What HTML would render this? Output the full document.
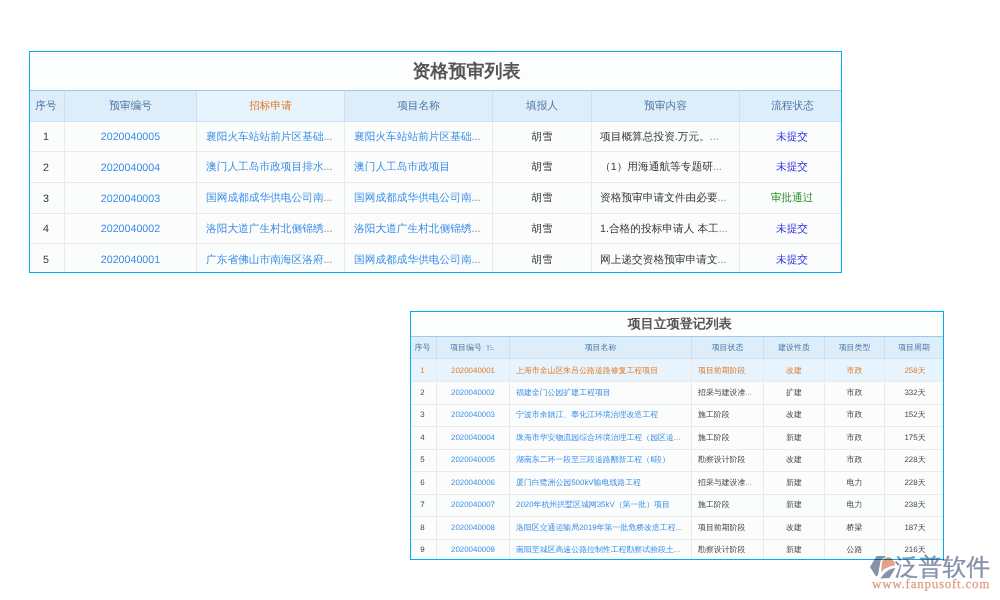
<!DOCTYPE html><html><head><meta charset="utf-8"><style>
*{margin:0;padding:0;box-sizing:border-box}
html,body{width:1000px;height:600px;background:#fff;overflow:hidden;font-family:"Liberation Sans",sans-serif;text-rendering:geometricPrecision}
.a{position:absolute}
.t{position:absolute;white-space:nowrap;overflow:visible}
.c{text-align:center}
.el{color:#8a8a8a}
</style></head><body><div class="a" style="left:29px;top:51px;width:813px;height:222px;background:#00adee"></div>
<div class="a" style="left:30px;top:52px;width:811px;height:220px;background:#fcfdfd"></div>
<div class="a" style="left:30px;top:90px;width:811px;height:1px;background:#9ccaee"></div>
<div class="a" style="left:30px;top:91px;width:811px;height:30px;background:#deedfa"></div>
<div class="a" style="left:197px;top:91px;width:147px;height:30px;background:#e8f4fd"></div>
<div class="a" style="left:30px;top:121px;width:811px;height:1px;background:#cfe2f3"></div>
<div class="a" style="left:30px;top:122px;width:811px;height:29px;background:#fbfdfd"></div>
<div class="a" style="left:30px;top:152px;width:811px;height:30px;background:#fcfcfc"></div>
<div class="a" style="left:30px;top:183px;width:811px;height:30px;background:#fbfdfd"></div>
<div class="a" style="left:30px;top:214px;width:811px;height:29px;background:#fcfcfc"></div>
<div class="a" style="left:30px;top:244px;width:811px;height:28px;background:#fbfdfd"></div>
<div class="a" style="left:30px;top:151px;width:811px;height:1px;background:#e9eaeb"></div>
<div class="a" style="left:30px;top:182px;width:811px;height:1px;background:#e9eaeb"></div>
<div class="a" style="left:30px;top:213px;width:811px;height:1px;background:#e9eaeb"></div>
<div class="a" style="left:30px;top:243px;width:811px;height:1px;background:#e9eaeb"></div>
<div class="a" style="left:64px;top:91px;width:1px;height:30px;background:#c8def1"></div>
<div class="a" style="left:64px;top:122px;width:1px;height:150px;background:#e8e9ea"></div>
<div class="a" style="left:196px;top:91px;width:1px;height:30px;background:#c8def1"></div>
<div class="a" style="left:196px;top:122px;width:1px;height:150px;background:#e8e9ea"></div>
<div class="a" style="left:344px;top:91px;width:1px;height:30px;background:#c8def1"></div>
<div class="a" style="left:344px;top:122px;width:1px;height:150px;background:#e8e9ea"></div>
<div class="a" style="left:492px;top:91px;width:1px;height:30px;background:#c8def1"></div>
<div class="a" style="left:492px;top:122px;width:1px;height:150px;background:#e8e9ea"></div>
<div class="a" style="left:591px;top:91px;width:1px;height:30px;background:#c8def1"></div>
<div class="a" style="left:591px;top:122px;width:1px;height:150px;background:#e8e9ea"></div>
<div class="a" style="left:739px;top:91px;width:1px;height:30px;background:#c8def1"></div>
<div class="a" style="left:739px;top:122px;width:1px;height:150px;background:#e8e9ea"></div>
<div class="t" style="left:380px;width:173px;text-align:center;top:59.40px;height:25.2px;line-height:25.2px;font-size:18px;color:#555;font-weight:bold">资格预审列表</div>
<div class="t" style="left:29px;width:34px;text-align:center;top:98.51px;height:14.979999999999999px;line-height:14.979999999999999px;font-size:10.7px;color:#4d77a3;font-weight:normal">序号</div>
<div class="t" style="left:65px;width:131px;text-align:center;top:98.51px;height:14.979999999999999px;line-height:14.979999999999999px;font-size:10.7px;color:#4d77a3;font-weight:normal">预审编号</div>
<div class="t" style="left:197px;width:147px;text-align:center;top:98.51px;height:14.979999999999999px;line-height:14.979999999999999px;font-size:10.7px;color:#e07b22;font-weight:normal">招标申请</div>
<div class="t" style="left:345px;width:147px;text-align:center;top:98.51px;height:14.979999999999999px;line-height:14.979999999999999px;font-size:10.7px;color:#4d77a3;font-weight:normal">项目名称</div>
<div class="t" style="left:493px;width:98px;text-align:center;top:98.51px;height:14.979999999999999px;line-height:14.979999999999999px;font-size:10.7px;color:#4d77a3;font-weight:normal">填报人</div>
<div class="t" style="left:592px;width:147px;text-align:center;top:98.51px;height:14.979999999999999px;line-height:14.979999999999999px;font-size:10.7px;color:#4d77a3;font-weight:normal">预审内容</div>
<div class="t" style="left:742px;width:101px;text-align:center;top:98.51px;height:14.979999999999999px;line-height:14.979999999999999px;font-size:10.7px;color:#4d77a3;font-weight:normal">流程状态</div>
<div class="t" style="left:29px;width:34px;text-align:center;top:130.21px;height:14.979999999999999px;line-height:14.979999999999999px;font-size:10.7px;color:#383838;font-weight:normal">1</div>
<div class="t" style="left:65px;width:131px;text-align:center;top:130.21px;height:14.979999999999999px;line-height:14.979999999999999px;font-size:10.7px;color:#3a8ee6;font-weight:normal">2020040005</div>
<div class="t" style="left:206px;width:138px;text-align:left;top:129.51px;height:14.979999999999999px;line-height:14.979999999999999px;font-size:10.7px;color:#3a8ee6;font-weight:normal">襄阳火车站站前片区基础<span class="el">...</span></div>
<div class="t" style="left:354px;width:138px;text-align:left;top:129.51px;height:14.979999999999999px;line-height:14.979999999999999px;font-size:10.7px;color:#3a8ee6;font-weight:normal">襄阳火车站站前片区基础<span class="el">...</span></div>
<div class="t" style="left:493px;width:98px;text-align:center;top:129.51px;height:14.979999999999999px;line-height:14.979999999999999px;font-size:10.7px;color:#383838;font-weight:normal">胡雪</div>
<div class="t" style="left:600px;width:139px;text-align:left;top:129.51px;height:14.979999999999999px;line-height:14.979999999999999px;font-size:10.7px;color:#383838;font-weight:normal">项目概算总投资.万元。<span class="el">...</span></div>
<div class="t" style="left:741.5px;width:101.0px;text-align:center;top:129.51px;height:14.979999999999999px;line-height:14.979999999999999px;font-size:10.7px;color:#3030e0;font-weight:normal">未提交</div>
<div class="t" style="left:29px;width:34px;text-align:center;top:160.96px;height:14.979999999999999px;line-height:14.979999999999999px;font-size:10.7px;color:#383838;font-weight:normal">2</div>
<div class="t" style="left:65px;width:131px;text-align:center;top:160.96px;height:14.979999999999999px;line-height:14.979999999999999px;font-size:10.7px;color:#3a8ee6;font-weight:normal">2020040004</div>
<div class="t" style="left:206px;width:138px;text-align:left;top:160.26px;height:14.979999999999999px;line-height:14.979999999999999px;font-size:10.7px;color:#3a8ee6;font-weight:normal">澳门人工岛市政项目排水<span class="el">...</span></div>
<div class="t" style="left:354px;width:138px;text-align:left;top:160.26px;height:14.979999999999999px;line-height:14.979999999999999px;font-size:10.7px;color:#3a8ee6;font-weight:normal">澳门人工岛市政项目</div>
<div class="t" style="left:493px;width:98px;text-align:center;top:160.26px;height:14.979999999999999px;line-height:14.979999999999999px;font-size:10.7px;color:#383838;font-weight:normal">胡雪</div>
<div class="t" style="left:600px;width:139px;text-align:left;top:160.26px;height:14.979999999999999px;line-height:14.979999999999999px;font-size:10.7px;color:#383838;font-weight:normal">（1）用海通航等专题研<span class="el">...</span></div>
<div class="t" style="left:741.5px;width:101.0px;text-align:center;top:160.26px;height:14.979999999999999px;line-height:14.979999999999999px;font-size:10.7px;color:#3030e0;font-weight:normal">未提交</div>
<div class="t" style="left:29px;width:34px;text-align:center;top:191.71px;height:14.979999999999999px;line-height:14.979999999999999px;font-size:10.7px;color:#383838;font-weight:normal">3</div>
<div class="t" style="left:65px;width:131px;text-align:center;top:191.71px;height:14.979999999999999px;line-height:14.979999999999999px;font-size:10.7px;color:#3a8ee6;font-weight:normal">2020040003</div>
<div class="t" style="left:206px;width:138px;text-align:left;top:191.01px;height:14.979999999999999px;line-height:14.979999999999999px;font-size:10.7px;color:#3a8ee6;font-weight:normal">国网成都成华供电公司南<span class="el">...</span></div>
<div class="t" style="left:354px;width:138px;text-align:left;top:191.01px;height:14.979999999999999px;line-height:14.979999999999999px;font-size:10.7px;color:#3a8ee6;font-weight:normal">国网成都成华供电公司南<span class="el">...</span></div>
<div class="t" style="left:493px;width:98px;text-align:center;top:191.01px;height:14.979999999999999px;line-height:14.979999999999999px;font-size:10.7px;color:#383838;font-weight:normal">胡雪</div>
<div class="t" style="left:600px;width:139px;text-align:left;top:191.01px;height:14.979999999999999px;line-height:14.979999999999999px;font-size:10.7px;color:#383838;font-weight:normal">资格预审申请文件由必要<span class="el">...</span></div>
<div class="t" style="left:741.5px;width:101.0px;text-align:center;top:191.01px;height:14.979999999999999px;line-height:14.979999999999999px;font-size:10.7px;color:#2a8f2a;font-weight:normal">审批通过</div>
<div class="t" style="left:29px;width:34px;text-align:center;top:222.46px;height:14.979999999999999px;line-height:14.979999999999999px;font-size:10.7px;color:#383838;font-weight:normal">4</div>
<div class="t" style="left:65px;width:131px;text-align:center;top:222.46px;height:14.979999999999999px;line-height:14.979999999999999px;font-size:10.7px;color:#3a8ee6;font-weight:normal">2020040002</div>
<div class="t" style="left:206px;width:138px;text-align:left;top:221.76px;height:14.979999999999999px;line-height:14.979999999999999px;font-size:10.7px;color:#3a8ee6;font-weight:normal">洛阳大道广生村北侧锦绣<span class="el">...</span></div>
<div class="t" style="left:354px;width:138px;text-align:left;top:221.76px;height:14.979999999999999px;line-height:14.979999999999999px;font-size:10.7px;color:#3a8ee6;font-weight:normal">洛阳大道广生村北侧锦绣<span class="el">...</span></div>
<div class="t" style="left:493px;width:98px;text-align:center;top:221.76px;height:14.979999999999999px;line-height:14.979999999999999px;font-size:10.7px;color:#383838;font-weight:normal">胡雪</div>
<div class="t" style="left:600px;width:139px;text-align:left;top:221.76px;height:14.979999999999999px;line-height:14.979999999999999px;font-size:10.7px;color:#383838;font-weight:normal">1.合格的投标申请人 本工<span class="el">...</span></div>
<div class="t" style="left:741.5px;width:101.0px;text-align:center;top:221.76px;height:14.979999999999999px;line-height:14.979999999999999px;font-size:10.7px;color:#3030e0;font-weight:normal">未提交</div>
<div class="t" style="left:29px;width:34px;text-align:center;top:253.21px;height:14.979999999999999px;line-height:14.979999999999999px;font-size:10.7px;color:#383838;font-weight:normal">5</div>
<div class="t" style="left:65px;width:131px;text-align:center;top:253.21px;height:14.979999999999999px;line-height:14.979999999999999px;font-size:10.7px;color:#3a8ee6;font-weight:normal">2020040001</div>
<div class="t" style="left:206px;width:138px;text-align:left;top:252.51px;height:14.979999999999999px;line-height:14.979999999999999px;font-size:10.7px;color:#3a8ee6;font-weight:normal">广东省佛山市南海区洛府<span class="el">...</span></div>
<div class="t" style="left:354px;width:138px;text-align:left;top:252.51px;height:14.979999999999999px;line-height:14.979999999999999px;font-size:10.7px;color:#3a8ee6;font-weight:normal">国网成都成华供电公司南<span class="el">...</span></div>
<div class="t" style="left:493px;width:98px;text-align:center;top:252.51px;height:14.979999999999999px;line-height:14.979999999999999px;font-size:10.7px;color:#383838;font-weight:normal">胡雪</div>
<div class="t" style="left:600px;width:139px;text-align:left;top:252.51px;height:14.979999999999999px;line-height:14.979999999999999px;font-size:10.7px;color:#383838;font-weight:normal">网上递交资格预审申请文<span class="el">...</span></div>
<div class="t" style="left:741.5px;width:101.0px;text-align:center;top:252.51px;height:14.979999999999999px;line-height:14.979999999999999px;font-size:10.7px;color:#3030e0;font-weight:normal">未提交</div>
<div class="a" style="left:410px;top:311px;width:534px;height:249px;background:#00adee"></div>
<div class="a" style="left:411px;top:312px;width:532px;height:247px;background:#fcfdfd"></div>
<div class="a" style="left:411px;top:336px;width:532px;height:1px;background:#9ccaee"></div>
<div class="a" style="left:411px;top:337px;width:532px;height:22px;background:#deedfa"></div>
<div class="a" style="left:411px;top:358px;width:532px;height:1px;background:#cfe2f3"></div>
<div class="a" style="left:411px;top:359px;width:532px;height:22px;background:#e8f4fd"></div>
<div class="a" style="left:411px;top:382px;width:532px;height:22px;background:#fcfcfc"></div>
<div class="a" style="left:411px;top:405px;width:532px;height:21px;background:#fbfdfd"></div>
<div class="a" style="left:411px;top:427px;width:532px;height:22px;background:#fcfcfc"></div>
<div class="a" style="left:411px;top:450px;width:532px;height:21px;background:#fbfdfd"></div>
<div class="a" style="left:411px;top:472px;width:532px;height:22px;background:#fcfcfc"></div>
<div class="a" style="left:411px;top:495px;width:532px;height:21px;background:#fbfdfd"></div>
<div class="a" style="left:411px;top:517px;width:532px;height:22px;background:#fcfcfc"></div>
<div class="a" style="left:411px;top:540px;width:532px;height:19px;background:#fbfdfd"></div>
<div class="a" style="left:411px;top:381px;width:532px;height:1px;background:#e9eaeb"></div>
<div class="a" style="left:411px;top:404px;width:532px;height:1px;background:#e9eaeb"></div>
<div class="a" style="left:411px;top:426px;width:532px;height:1px;background:#e9eaeb"></div>
<div class="a" style="left:411px;top:449px;width:532px;height:1px;background:#e9eaeb"></div>
<div class="a" style="left:411px;top:471px;width:532px;height:1px;background:#e9eaeb"></div>
<div class="a" style="left:411px;top:494px;width:532px;height:1px;background:#e9eaeb"></div>
<div class="a" style="left:411px;top:516px;width:532px;height:1px;background:#e9eaeb"></div>
<div class="a" style="left:411px;top:539px;width:532px;height:1px;background:#e9eaeb"></div>
<div class="a" style="left:436px;top:337px;width:1px;height:21px;background:#c8def1"></div>
<div class="a" style="left:436px;top:359px;width:1px;height:200px;background:#e8e9ea"></div>
<div class="a" style="left:509px;top:337px;width:1px;height:21px;background:#c8def1"></div>
<div class="a" style="left:509px;top:359px;width:1px;height:200px;background:#e8e9ea"></div>
<div class="a" style="left:691px;top:337px;width:1px;height:21px;background:#c8def1"></div>
<div class="a" style="left:691px;top:359px;width:1px;height:200px;background:#e8e9ea"></div>
<div class="a" style="left:763px;top:337px;width:1px;height:21px;background:#c8def1"></div>
<div class="a" style="left:763px;top:359px;width:1px;height:200px;background:#e8e9ea"></div>
<div class="a" style="left:824px;top:337px;width:1px;height:21px;background:#c8def1"></div>
<div class="a" style="left:824px;top:359px;width:1px;height:200px;background:#e8e9ea"></div>
<div class="a" style="left:884px;top:337px;width:1px;height:21px;background:#c8def1"></div>
<div class="a" style="left:884px;top:359px;width:1px;height:200px;background:#e8e9ea"></div>
<div class="t" style="left:600px;width:159.39999999999998px;text-align:center;top:314.90px;height:18.2px;line-height:18.2px;font-size:13px;color:#555;font-weight:bold">项目立项登记列表</div>
<div class="t" style="left:410px;width:25px;text-align:center;top:341.97px;height:11.06px;line-height:11.06px;font-size:7.9px;color:#4d77a3;font-weight:normal">序号</div>
<div class="t" style="left:430px;width:72px;text-align:center;top:341.97px;height:11.06px;line-height:11.06px;font-size:7.9px;color:#4d77a3;font-weight:normal">项目编号</div>
<div class="t" style="left:510px;width:181px;text-align:center;top:341.97px;height:11.06px;line-height:11.06px;font-size:7.9px;color:#4d77a3;font-weight:normal">项目名称</div>
<div class="t" style="left:692px;width:71px;text-align:center;top:341.97px;height:11.06px;line-height:11.06px;font-size:7.9px;color:#4d77a3;font-weight:normal">项目状态</div>
<div class="t" style="left:764px;width:60px;text-align:center;top:341.97px;height:11.06px;line-height:11.06px;font-size:7.9px;color:#4d77a3;font-weight:normal">建设性质</div>
<div class="t" style="left:825px;width:59px;text-align:center;top:341.97px;height:11.06px;line-height:11.06px;font-size:7.9px;color:#4d77a3;font-weight:normal">项目类型</div>
<div class="t" style="left:885px;width:58px;text-align:center;top:341.97px;height:11.06px;line-height:11.06px;font-size:7.9px;color:#4d77a3;font-weight:normal">项目周期</div>
<svg class="a" style="left:486px;top:344px" width="10" height="8" viewBox="0 0 10 8"><g fill="#93bae0"><rect x="1.4" y="1" width="1.5" height="5.5"/><rect x="0.9" y="1" width="2.5" height="0.9"/><rect x="4" y="1" width="1.2" height="0.9"/><rect x="4" y="3" width="2.6" height="0.9"/><rect x="4" y="5" width="4" height="0.9"/></g></svg>
<div class="t" style="left:410px;width:25px;text-align:center;top:364.57px;height:11.06px;line-height:11.06px;font-size:7.9px;color:#e07b2a;font-weight:normal">1</div>
<div class="t" style="left:437px;width:72px;text-align:center;top:364.57px;height:11.06px;line-height:11.06px;font-size:7.9px;color:#e07b2a;font-weight:normal">2020040001</div>
<div class="t" style="left:516px;width:175px;text-align:left;top:364.57px;height:11.06px;line-height:11.06px;font-size:7.9px;color:#e07b2a;font-weight:normal">上海市金山区朱吕公路道路修复工程项目</div>
<div class="t" style="left:698px;width:65px;text-align:left;top:364.57px;height:11.06px;line-height:11.06px;font-size:7.9px;color:#e07b2a;font-weight:normal">项目前期阶段</div>
<div class="t" style="left:764px;width:60px;text-align:center;top:364.57px;height:11.06px;line-height:11.06px;font-size:7.9px;color:#e07b2a;font-weight:normal">改建</div>
<div class="t" style="left:825px;width:59px;text-align:center;top:364.57px;height:11.06px;line-height:11.06px;font-size:7.9px;color:#e07b2a;font-weight:normal">市政</div>
<div class="t" style="left:886px;width:58px;text-align:center;top:364.57px;height:11.06px;line-height:11.06px;font-size:7.9px;color:#e07b2a;font-weight:normal">258天</div>
<div class="t" style="left:410px;width:25px;text-align:center;top:387.03px;height:11.06px;line-height:11.06px;font-size:7.9px;color:#444;font-weight:normal">2</div>
<div class="t" style="left:437px;width:72px;text-align:center;top:387.03px;height:11.06px;line-height:11.06px;font-size:7.9px;color:#3a8ee6;font-weight:normal">2020040002</div>
<div class="t" style="left:516px;width:175px;text-align:left;top:387.03px;height:11.06px;line-height:11.06px;font-size:7.9px;color:#3a8ee6;font-weight:normal">福建金门公园扩建工程项目</div>
<div class="t" style="left:698px;width:65px;text-align:left;top:387.03px;height:11.06px;line-height:11.06px;font-size:7.9px;color:#444;font-weight:normal">招采与建设准<span class="el">...</span></div>
<div class="t" style="left:764px;width:60px;text-align:center;top:387.03px;height:11.06px;line-height:11.06px;font-size:7.9px;color:#444;font-weight:normal">扩建</div>
<div class="t" style="left:825px;width:59px;text-align:center;top:387.03px;height:11.06px;line-height:11.06px;font-size:7.9px;color:#444;font-weight:normal">市政</div>
<div class="t" style="left:886px;width:58px;text-align:center;top:387.03px;height:11.06px;line-height:11.06px;font-size:7.9px;color:#444;font-weight:normal">332天</div>
<div class="t" style="left:410px;width:25px;text-align:center;top:409.49px;height:11.06px;line-height:11.06px;font-size:7.9px;color:#444;font-weight:normal">3</div>
<div class="t" style="left:437px;width:72px;text-align:center;top:409.49px;height:11.06px;line-height:11.06px;font-size:7.9px;color:#3a8ee6;font-weight:normal">2020040003</div>
<div class="t" style="left:516px;width:175px;text-align:left;top:409.49px;height:11.06px;line-height:11.06px;font-size:7.9px;color:#3a8ee6;font-weight:normal">宁波市余姚江、奉化江环境治理改造工程</div>
<div class="t" style="left:698px;width:65px;text-align:left;top:409.49px;height:11.06px;line-height:11.06px;font-size:7.9px;color:#444;font-weight:normal">施工阶段</div>
<div class="t" style="left:764px;width:60px;text-align:center;top:409.49px;height:11.06px;line-height:11.06px;font-size:7.9px;color:#444;font-weight:normal">改建</div>
<div class="t" style="left:825px;width:59px;text-align:center;top:409.49px;height:11.06px;line-height:11.06px;font-size:7.9px;color:#444;font-weight:normal">市政</div>
<div class="t" style="left:886px;width:58px;text-align:center;top:409.49px;height:11.06px;line-height:11.06px;font-size:7.9px;color:#444;font-weight:normal">152天</div>
<div class="t" style="left:410px;width:25px;text-align:center;top:431.95px;height:11.06px;line-height:11.06px;font-size:7.9px;color:#444;font-weight:normal">4</div>
<div class="t" style="left:437px;width:72px;text-align:center;top:431.95px;height:11.06px;line-height:11.06px;font-size:7.9px;color:#3a8ee6;font-weight:normal">2020040004</div>
<div class="t" style="left:516px;width:175px;text-align:left;top:431.95px;height:11.06px;line-height:11.06px;font-size:7.9px;color:#3a8ee6;font-weight:normal">珠海市华安物流园综合环境治理工程（园区道<span class="el">...</span></div>
<div class="t" style="left:698px;width:65px;text-align:left;top:431.95px;height:11.06px;line-height:11.06px;font-size:7.9px;color:#444;font-weight:normal">施工阶段</div>
<div class="t" style="left:764px;width:60px;text-align:center;top:431.95px;height:11.06px;line-height:11.06px;font-size:7.9px;color:#444;font-weight:normal">新建</div>
<div class="t" style="left:825px;width:59px;text-align:center;top:431.95px;height:11.06px;line-height:11.06px;font-size:7.9px;color:#444;font-weight:normal">市政</div>
<div class="t" style="left:886px;width:58px;text-align:center;top:431.95px;height:11.06px;line-height:11.06px;font-size:7.9px;color:#444;font-weight:normal">175天</div>
<div class="t" style="left:410px;width:25px;text-align:center;top:454.41px;height:11.06px;line-height:11.06px;font-size:7.9px;color:#444;font-weight:normal">5</div>
<div class="t" style="left:437px;width:72px;text-align:center;top:454.41px;height:11.06px;line-height:11.06px;font-size:7.9px;color:#3a8ee6;font-weight:normal">2020040005</div>
<div class="t" style="left:516px;width:175px;text-align:left;top:454.41px;height:11.06px;line-height:11.06px;font-size:7.9px;color:#3a8ee6;font-weight:normal">湖南东二环一段至三段道路翻新工程（Ⅱ段）</div>
<div class="t" style="left:698px;width:65px;text-align:left;top:454.41px;height:11.06px;line-height:11.06px;font-size:7.9px;color:#444;font-weight:normal">勘察设计阶段</div>
<div class="t" style="left:764px;width:60px;text-align:center;top:454.41px;height:11.06px;line-height:11.06px;font-size:7.9px;color:#444;font-weight:normal">改建</div>
<div class="t" style="left:825px;width:59px;text-align:center;top:454.41px;height:11.06px;line-height:11.06px;font-size:7.9px;color:#444;font-weight:normal">市政</div>
<div class="t" style="left:886px;width:58px;text-align:center;top:454.41px;height:11.06px;line-height:11.06px;font-size:7.9px;color:#444;font-weight:normal">228天</div>
<div class="t" style="left:410px;width:25px;text-align:center;top:476.87px;height:11.06px;line-height:11.06px;font-size:7.9px;color:#444;font-weight:normal">6</div>
<div class="t" style="left:437px;width:72px;text-align:center;top:476.87px;height:11.06px;line-height:11.06px;font-size:7.9px;color:#3a8ee6;font-weight:normal">2020040006</div>
<div class="t" style="left:516px;width:175px;text-align:left;top:476.87px;height:11.06px;line-height:11.06px;font-size:7.9px;color:#3a8ee6;font-weight:normal">厦门白鹭洲公园500kV输电线路工程</div>
<div class="t" style="left:698px;width:65px;text-align:left;top:476.87px;height:11.06px;line-height:11.06px;font-size:7.9px;color:#444;font-weight:normal">招采与建设准<span class="el">...</span></div>
<div class="t" style="left:764px;width:60px;text-align:center;top:476.87px;height:11.06px;line-height:11.06px;font-size:7.9px;color:#444;font-weight:normal">新建</div>
<div class="t" style="left:825px;width:59px;text-align:center;top:476.87px;height:11.06px;line-height:11.06px;font-size:7.9px;color:#444;font-weight:normal">电力</div>
<div class="t" style="left:886px;width:58px;text-align:center;top:476.87px;height:11.06px;line-height:11.06px;font-size:7.9px;color:#444;font-weight:normal">228天</div>
<div class="t" style="left:410px;width:25px;text-align:center;top:499.33px;height:11.06px;line-height:11.06px;font-size:7.9px;color:#444;font-weight:normal">7</div>
<div class="t" style="left:437px;width:72px;text-align:center;top:499.33px;height:11.06px;line-height:11.06px;font-size:7.9px;color:#3a8ee6;font-weight:normal">2020040007</div>
<div class="t" style="left:516px;width:175px;text-align:left;top:499.33px;height:11.06px;line-height:11.06px;font-size:7.9px;color:#3a8ee6;font-weight:normal">2020年杭州拱墅区城网35kV（第一批）项目</div>
<div class="t" style="left:698px;width:65px;text-align:left;top:499.33px;height:11.06px;line-height:11.06px;font-size:7.9px;color:#444;font-weight:normal">施工阶段</div>
<div class="t" style="left:764px;width:60px;text-align:center;top:499.33px;height:11.06px;line-height:11.06px;font-size:7.9px;color:#444;font-weight:normal">新建</div>
<div class="t" style="left:825px;width:59px;text-align:center;top:499.33px;height:11.06px;line-height:11.06px;font-size:7.9px;color:#444;font-weight:normal">电力</div>
<div class="t" style="left:886px;width:58px;text-align:center;top:499.33px;height:11.06px;line-height:11.06px;font-size:7.9px;color:#444;font-weight:normal">238天</div>
<div class="t" style="left:410px;width:25px;text-align:center;top:521.79px;height:11.06px;line-height:11.06px;font-size:7.9px;color:#444;font-weight:normal">8</div>
<div class="t" style="left:437px;width:72px;text-align:center;top:521.79px;height:11.06px;line-height:11.06px;font-size:7.9px;color:#3a8ee6;font-weight:normal">2020040008</div>
<div class="t" style="left:516px;width:175px;text-align:left;top:521.79px;height:11.06px;line-height:11.06px;font-size:7.9px;color:#3a8ee6;font-weight:normal">洛阳区交通运输局2019年第一批危桥改造工程<span class="el">...</span></div>
<div class="t" style="left:698px;width:65px;text-align:left;top:521.79px;height:11.06px;line-height:11.06px;font-size:7.9px;color:#444;font-weight:normal">项目前期阶段</div>
<div class="t" style="left:764px;width:60px;text-align:center;top:521.79px;height:11.06px;line-height:11.06px;font-size:7.9px;color:#444;font-weight:normal">改建</div>
<div class="t" style="left:825px;width:59px;text-align:center;top:521.79px;height:11.06px;line-height:11.06px;font-size:7.9px;color:#444;font-weight:normal">桥梁</div>
<div class="t" style="left:886px;width:58px;text-align:center;top:521.79px;height:11.06px;line-height:11.06px;font-size:7.9px;color:#444;font-weight:normal">187天</div>
<div class="t" style="left:410px;width:25px;text-align:center;top:544.25px;height:11.06px;line-height:11.06px;font-size:7.9px;color:#444;font-weight:normal">9</div>
<div class="t" style="left:437px;width:72px;text-align:center;top:544.25px;height:11.06px;line-height:11.06px;font-size:7.9px;color:#3a8ee6;font-weight:normal">2020040009</div>
<div class="t" style="left:516px;width:175px;text-align:left;top:544.25px;height:11.06px;line-height:11.06px;font-size:7.9px;color:#3a8ee6;font-weight:normal">南阳至城区高速公路控制性工程勘察试验段土<span class="el">...</span></div>
<div class="t" style="left:698px;width:65px;text-align:left;top:544.25px;height:11.06px;line-height:11.06px;font-size:7.9px;color:#444;font-weight:normal">勘察设计阶段</div>
<div class="t" style="left:764px;width:60px;text-align:center;top:544.25px;height:11.06px;line-height:11.06px;font-size:7.9px;color:#444;font-weight:normal">新建</div>
<div class="t" style="left:825px;width:59px;text-align:center;top:544.25px;height:11.06px;line-height:11.06px;font-size:7.9px;color:#444;font-weight:normal">公路</div>
<div class="t" style="left:886px;width:58px;text-align:center;top:544.25px;height:11.06px;line-height:11.06px;font-size:7.9px;color:#444;font-weight:normal">216天</div>
<svg class="a" style="left:866px;top:552px;mix-blend-mode:multiply" width="32" height="30" viewBox="0 0 32 30"><path fill="#8692ab" d="M10.5,4 L20,4 L14.6,8.8 L12,23 L10,24.5 L4,15 Z"/><path fill="#e2a289" d="M15,20 L16,10 Q18,5 23.5,5 Q28,7 29,13.5 Q21,14 15,20 Z"/><path fill="#8692ab" d="M14.5,26.5 L23.5,26 L29.5,16 Q21,16 14.5,26.5 Z"/></svg>
<div class="t" style="left:894.8px;top:552.8px;font-size:23.8px;line-height:30px;mix-blend-mode:multiply;-webkit-text-stroke:0.35px #8692ab;color:#8692ab">泛普软件</div>
<div class="t" style="left:872px;top:576.7px;font-size:13px;line-height:14px;letter-spacing:0.75px;color:#de9f84;-webkit-text-stroke:0.25px #de9f84;font-family:'Liberation Serif',serif">www.fanpusoft.com</div></body></html>
